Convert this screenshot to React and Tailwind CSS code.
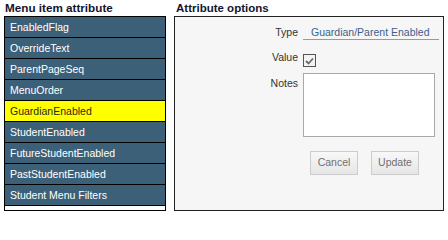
const ITEMS = [
  "EnabledFlag",
  "OverrideText",
  "ParentPageSeq",
  "MenuOrder",
  "GuardianEnabled",
  "StudentEnabled",
  "FutureStudentEnabled",
  "PastStudentEnabled",
  "Student Menu Filters",
]

const SELECTED = "GuardianEnabled"

export default function App() {
  return (
    <div className="w-[448px] h-[216px] bg-white flex font-['Liberation_Sans',Arial,sans-serif] text-[10.5px]">
      {/* menu item list */}
      <div className="ml-[4px] w-[162px] flex flex-col">
        <h2 className="h-[16px] leading-[16px] pl-[1px] text-[11.7px] font-bold text-[#14142e]">Menu item attribute</h2>
        <div className="border border-black bg-white pb-[4px]">
          {ITEMS.map((item) => (
            <div
              key={item}
              className={`h-[21px] leading-[20px] border-b border-black pl-[5px] ${
                item === SELECTED ? "bg-[#ffff00] text-[#2a2a10]" : "bg-[#3c6077] text-white"
              }`}
            >
              {item}
            </div>
          ))}
        </div>
      </div>

      {/* attribute options */}
      <div className="ml-[8px] w-[270px] flex flex-col">
        <h2 className="h-[16px] leading-[16px] pl-[2px] text-[11.5px] font-bold text-[#14142e]">Attribute options</h2>
        <div className="h-[195px] border border-[#222] bg-[#f6f6f6] flex flex-col">
          <div className="mt-[9px] flex">
            <div className="w-[128px] pr-[5px] text-right leading-[13px] text-[#333]">Type</div>
            <div className="w-[136px] h-[14px] leading-[13px] border-b border-[#9a9a9a] pl-[8px] text-[#3b5f8c]">
              Guardian/Parent Enabled
            </div>
          </div>

          <div className="mt-[11px] flex">
            <div className="w-[128px] pr-[5px] text-right leading-[12px] text-[#333]">Value</div>
            <div className="mt-[3px] w-[13px] h-[13px] border border-[#555] bg-[#f3f3f3] flex items-center justify-center">
              <svg width="9" height="8" viewBox="0 0 9 8">
                <path d="M1 4 L3.5 6.5 L8 1.5" fill="none" stroke="#6a6a6a" strokeWidth="1.8" />
              </svg>
            </div>
          </div>

          <div className="mt-[6px] flex">
            <div className="w-[128px] pr-[5px] mt-[4px] text-right leading-[12px] text-[#333]">Notes</div>
            <textarea className="w-[132px] h-[64px] border border-[#a9a9a9] bg-white resize-none outline-none" />
          </div>

          <div className="mt-[14px] ml-[135px] flex gap-[13px]">
            <button className="w-[48px] h-[24px] border border-[#cccccc] bg-gradient-to-b from-[#f8f8f8] to-[#e6e6e6] text-[#707070]">
              Cancel
            </button>
            <button className="w-[48px] h-[24px] border border-[#cccccc] bg-gradient-to-b from-[#f8f8f8] to-[#e6e6e6] text-[#707070]">
              Update
            </button>
          </div>
        </div>
      </div>
    </div>
  )
}
